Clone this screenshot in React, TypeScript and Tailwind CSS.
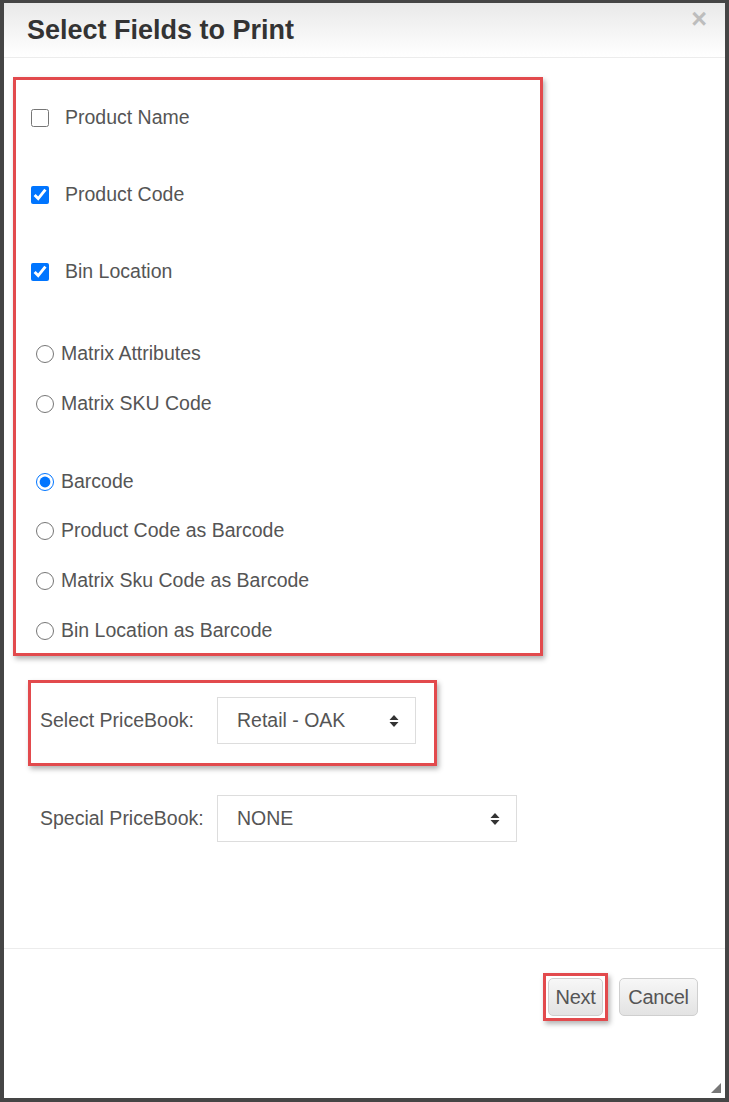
import { useState } from 'react';

const font = { fontFamily: '"Liberation Sans", Arial, sans-serif' };

function UpDown() {
  return (
    <svg width="10" height="14" viewBox="0 0 10 14" className="shrink-0">
      <path d="M5 1 L9.5 6 H0.5 Z" fill="#333" />
      <path d="M5 13 L9.5 8 H0.5 Z" fill="#333" />
    </svg>
  );
}

function Select({ value, width }: { value: string; width: string }) {
  return (
    <div
      className={`flex h-[47px] items-center justify-between border border-[#ddd] bg-white pr-[16px] pl-[19px] text-[19.5px] text-[#555] ${width}`}
    >
      <span>{value}</span>
      <UpDown />
    </div>
  );
}

function Check({ label, checked, className }: { label: string; checked: boolean; className: string }) {
  const [on, setOn] = useState(checked);
  return (
    <label className={`flex h-[24px] items-center ${className}`}>
      <input
        type="checkbox"
        checked={on}
        onChange={() => setOn(!on)}
        className="ml-[15px] h-[18px] w-[18px] accent-[#0075ff]"
      />
      <span className="ml-[16px]">{label}</span>
    </label>
  );
}

function Radio({ label, group, checked, className }: { label: string; group: string; checked?: boolean; className: string }) {
  return (
    <label className={`flex h-[24px] items-center ${className}`}>
      <input
        type="radio"
        name={group}
        defaultChecked={checked}
        className="ml-[20px] h-[18px] w-[18px] accent-[#0075ff]"
      />
      <span className="ml-[7px]">{label}</span>
    </label>
  );
}

export default function App() {
  return (
    <div
      className="h-[1102px] w-[729px] border-x-4 border-t-[3px] border-b-4 border-[#454545] bg-[#454545]"
      style={font}
    >
      <div className="relative flex h-full flex-col bg-white">
        {/* header */}
        <div className="relative flex h-[55px] shrink-0 items-center border-b border-[#ececec] bg-gradient-to-b from-[#e9e9e9] to-white pl-[23px]">
          <h1 className="text-[27px] font-bold text-[#333]">Select Fields to Print</h1>
          <span className="absolute top-[3px] right-[18px] text-[27px] leading-[27px] font-bold text-[#bdbdbd]">×</span>
        </div>

        {/* body */}
        <div className="flex-1 text-[19.5px] text-[#555]">
          <div className="mt-[19px] ml-[9px] w-[530px] border-[3px] border-[#e24a4d] pb-[10px] shadow-[2px_3px_5px_rgba(0,0,0,0.3)]">
            <Check label="Product Name" checked={false} className="mt-[26px]" />
            <Check label="Product Code" checked className="mt-[53px]" />
            <Check label="Bin Location" checked className="mt-[53px]" />

            <Radio label="Matrix Attributes" group="matrix" className="mt-[58px]" />
            <Radio label="Matrix SKU Code" group="matrix" className="mt-[26px]" />

            <Radio label="Barcode" group="barcode" checked className="mt-[54px]" />
            <Radio label="Product Code as Barcode" group="barcode" className="mt-[25px]" />
            <Radio label="Matrix Sku Code as Barcode" group="barcode" className="mt-[26px]" />
            <Radio label="Bin Location as Barcode" group="barcode" className="mt-[26px]" />
          </div>

          <div className="mt-[24px] ml-[24px] flex w-[409px] items-center border-[3px] border-[#e24a4d] pt-[14px] pr-[18px] pb-[19px] pl-[9px] shadow-[2px_3px_5px_rgba(0,0,0,0.3)]">
            <span className="w-[177px]">Select PriceBook:</span>
            <Select value="Retail - OAK" width="w-[199px]" />
          </div>

          <div className="mt-[29px] ml-[36px] flex items-center">
            <span className="w-[177px]">Special PriceBook:</span>
            <Select value="NONE" width="w-[300px]" />
          </div>
        </div>

        {/* footer */}
        <div className="flex h-[150px] shrink-0 items-start justify-end gap-[11px] border-t border-[#ececec] pt-[24px] pr-[27px]">
          <div className="border-[3px] border-[#e24a4d] p-[2px] shadow-[2px_3px_5px_rgba(0,0,0,0.3)]">
            <button className="h-[38px] w-[55px] rounded-[5px] border border-[#cfcfcf] bg-gradient-to-b from-[#f7f7f7] to-[#e3e3e3] text-[20px] tracking-[-0.3px] text-[#555]">
              Next
            </button>
          </div>
          <button className="mt-[5px] h-[38px] w-[79px] rounded-[5px] border border-[#cfcfcf] bg-gradient-to-b from-[#f7f7f7] to-[#e3e3e3] text-[20px] tracking-[-0.3px] text-[#555]">
            Cancel
          </button>
        </div>

        <svg width="12" height="12" viewBox="0 0 12 12" className="absolute right-[3px] bottom-[4px]">
          <path d="M11 1 L11 11 L1 11 Z" fill="#777" />
        </svg>
      </div>
    </div>
  );
}
